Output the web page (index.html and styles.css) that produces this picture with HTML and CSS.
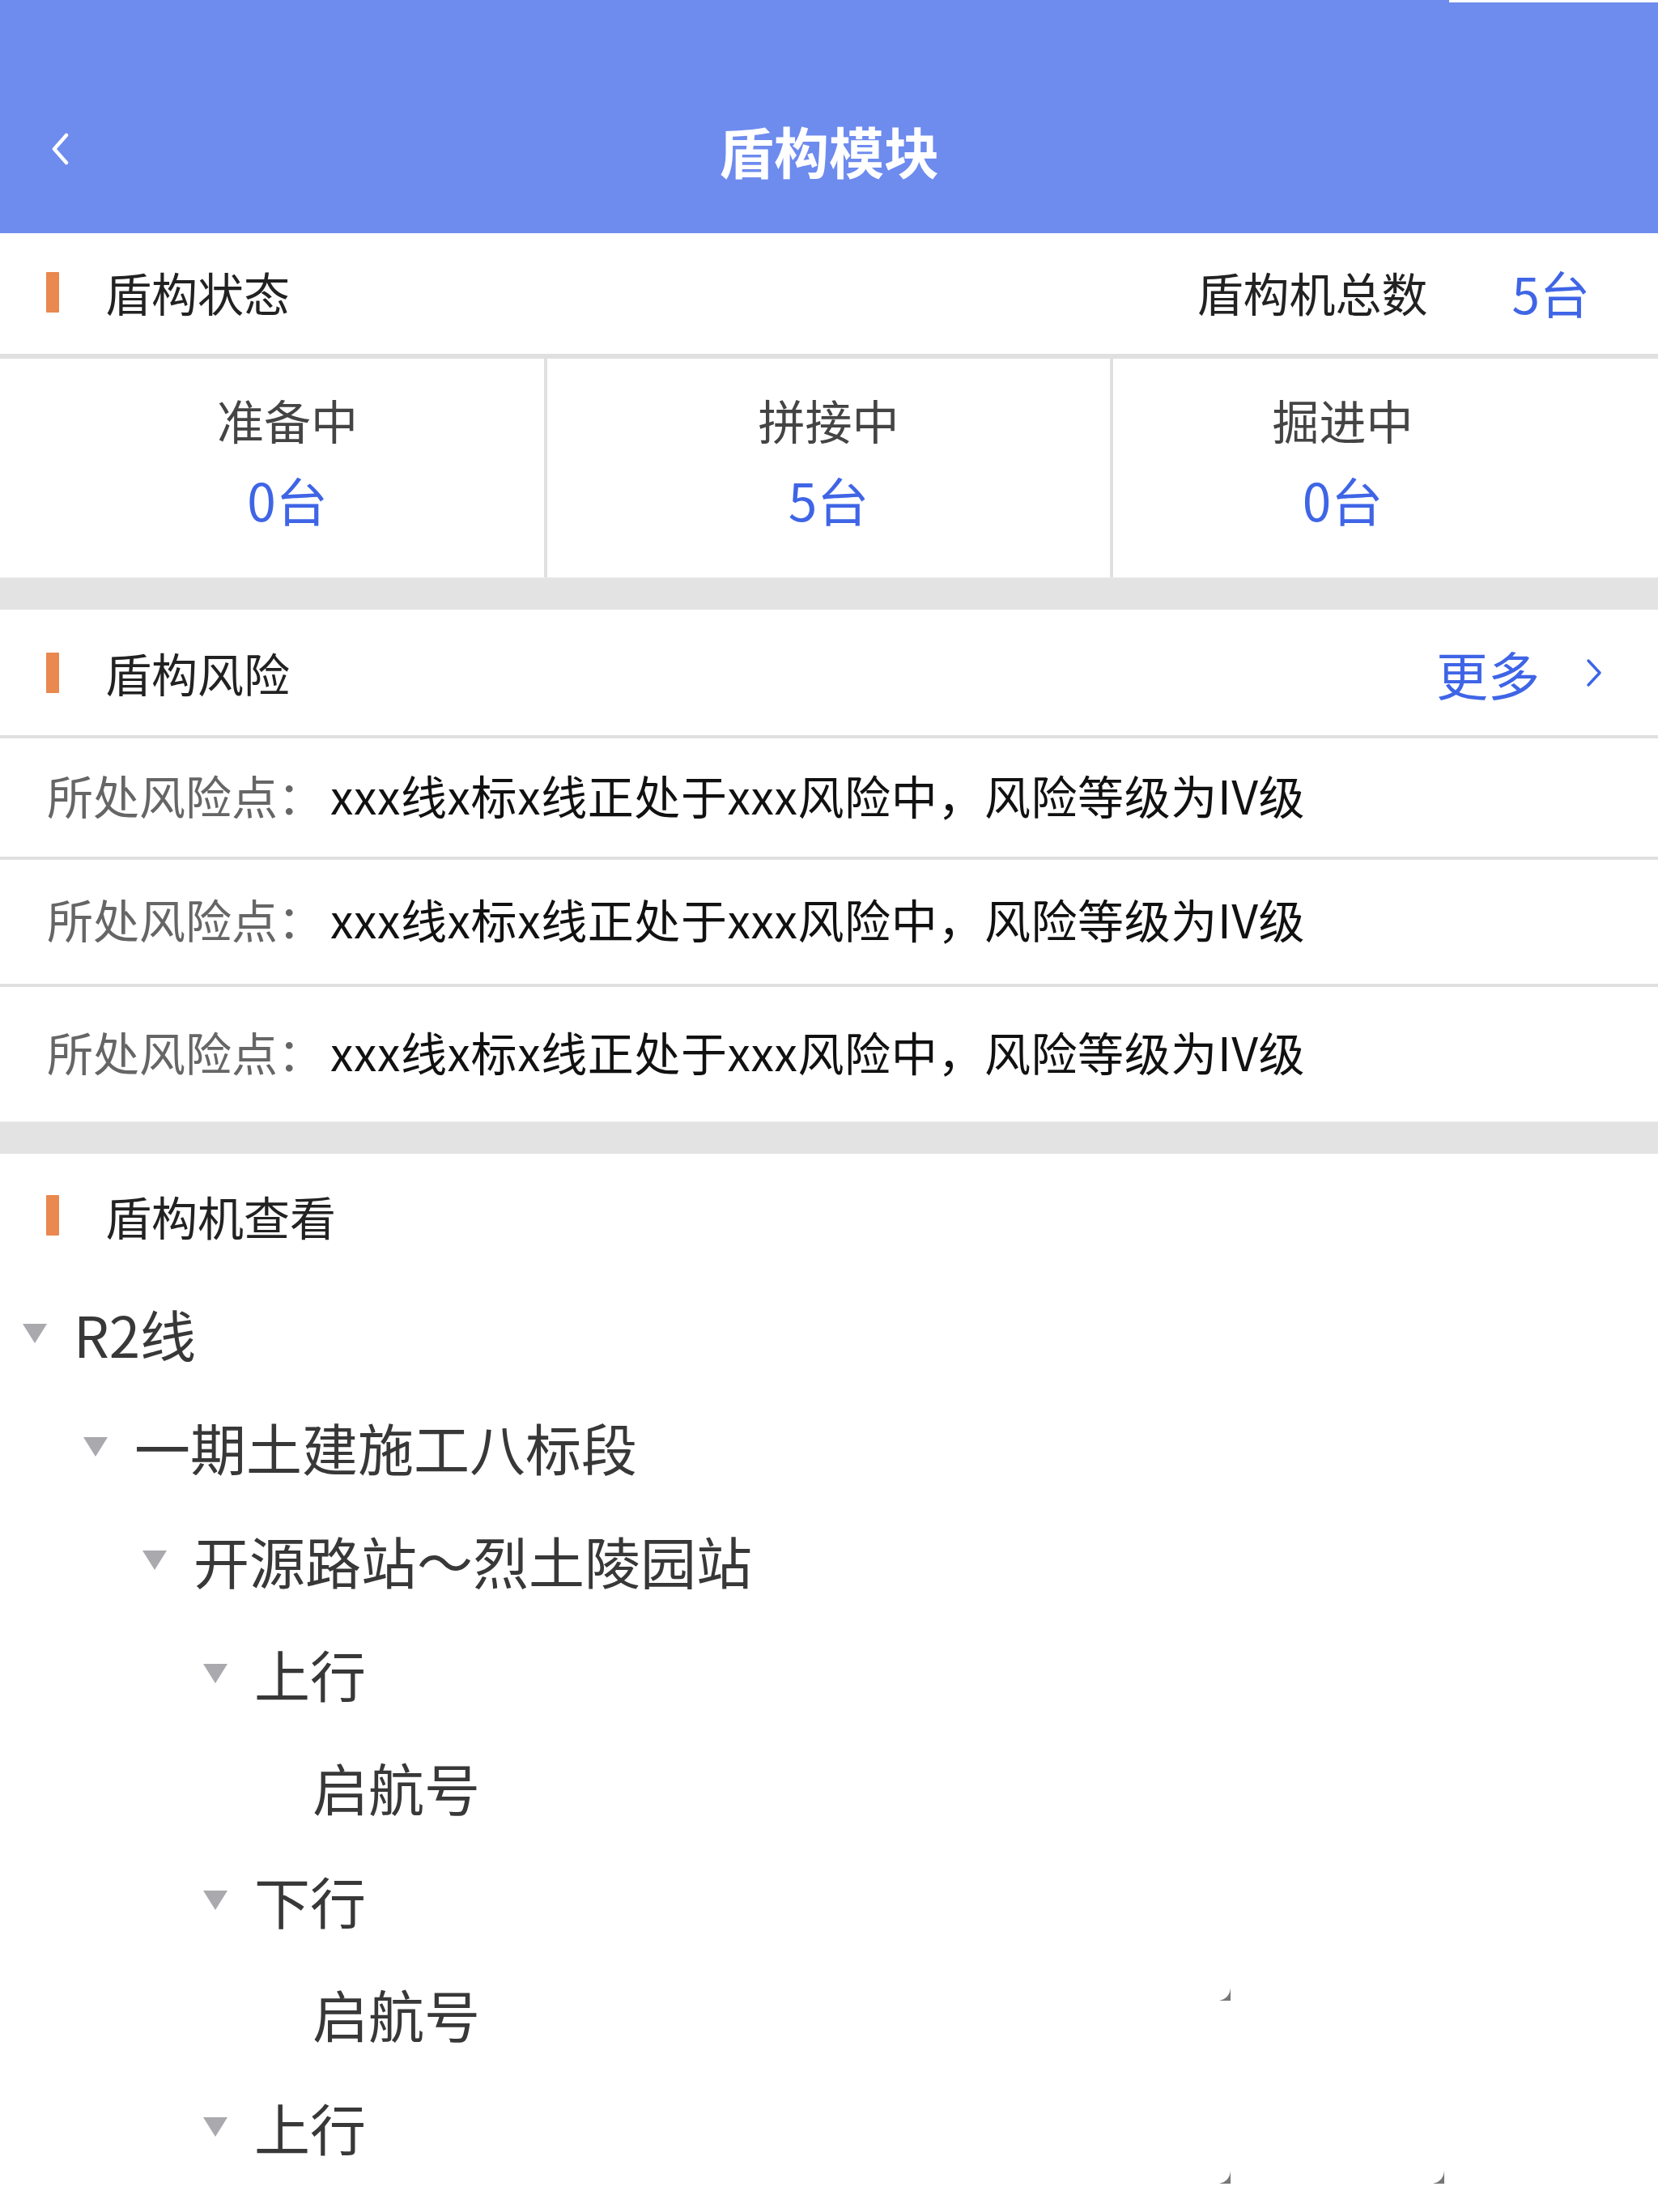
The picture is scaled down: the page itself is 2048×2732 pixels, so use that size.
FILE: index.html
```html
<!DOCTYPE html>
<html lang="zh-CN">
<head>
<meta charset="utf-8">
<title>盾构模块</title>
<link rel="stylesheet" href="styles.css">
</head>
<body>
<div class="page">
  <header class="topbar">
    <span class="back">
      <svg viewBox="0 0 24 40" width="24" height="40"><path d="M20 3 L5 20 L20 37" fill="none" stroke="#fff" stroke-width="4.5" stroke-linecap="round" stroke-linejoin="round"/></svg>
    </span>
    <h1 class="title">盾构模块</h1>
    <span class="edge-strip"></span>
  </header>

  <section class="block">
    <div class="sec-head sec-head-first">
      <span class="bar"></span>
      <span class="sec-title">盾构状态</span>
      <span class="sec-right"><span class="total-label">盾构机总数</span><span class="blue total-num">5台</span></span>
    </div>
    <div class="stats">
      <div class="stat stat-a"><span class="stat-label">准备中</span><span class="stat-val">0台</span></div>
      <div class="stat stat-b"><span class="stat-label">拼接中</span><span class="stat-val">5台</span></div>
      <div class="stat stat-c"><span class="stat-label">掘进中</span><span class="stat-val">0台</span></div>
    </div>
  </section>

  <div class="band"></div>

  <section class="block">
    <div class="sec-head sec-head-line">
      <span class="bar"></span>
      <span class="sec-title">盾构风险</span>
      <span class="sec-right more"><span>更多</span>
        <svg viewBox="0 0 22 38" width="22" height="38"><path d="M4 4 L18 19 L4 34" fill="none" stroke="#3f65e6" stroke-width="3.5" stroke-linecap="round" stroke-linejoin="round"/></svg>
      </span>
    </div>
    <ul class="risks">
      <li class="risk"><span class="risk-label">所处风险点：</span><span class="risk-text">xxx线x标x线正处于xxx风险中，风险等级为IV级</span></li>
      <li class="risk"><span class="risk-label">所处风险点：</span><span class="risk-text">xxx线x标x线正处于xxx风险中，风险等级为IV级</span></li>
      <li class="risk risk-last"><span class="risk-label">所处风险点：</span><span class="risk-text">xxx线x标x线正处于xxx风险中，风险等级为IV级</span></li>
    </ul>
  </section>

  <div class="band"></div>

  <section class="block tree-block">
    <div class="sec-head">
      <span class="bar"></span>
      <span class="sec-title">盾构机查看</span>
    </div>
    <ul class="tree">
      <li class="node lv0"><span class="caret"></span><span class="label">R2线</span></li>
      <li class="node lv1"><span class="caret"></span><span class="label">一期土建施工八标段</span></li>
      <li class="node lv2"><span class="caret"></span><span class="label">开源路站～烈土陵园站</span></li>
      <li class="node lv3"><span class="caret"></span><span class="label">上行</span></li>
      <li class="node lv4"><span class="caret none"></span><span class="label">启航号</span></li>
      <li class="node lv3"><span class="caret"></span><span class="label">下行</span></li>
      <li class="node lv4"><span class="caret none"></span><span class="label">启航号</span></li>
      <li class="node lv3"><span class="caret"></span><span class="label">上行</span></li>
    </ul>
    <svg class="corner c1" viewBox="0 0 14 16" width="14" height="16"><path d="M14 0 Q13 13 0 16 L14 16 Z" fill="#777"/></svg>
    <svg class="corner c2" viewBox="0 0 14 16" width="14" height="16"><path d="M14 0 Q13 13 0 16 L14 16 Z" fill="#777"/></svg>
    <svg class="corner c3" viewBox="0 0 14 16" width="14" height="16"><path d="M14 0 Q13 13 0 16 L14 16 Z" fill="#777"/></svg>
  </section>
</div>
</body>
</html>
```

FILE: styles.css
```css
* { box-sizing: border-box; }
html, body { margin: 0; padding: 0; background: #fff; }
body {
  font-family: "Noto Sans CJK SC", "Noto Sans", sans-serif;
  color: #222;
}
.page { position: relative; width: 2048px; min-height: 2732px; background: #fff; overflow: hidden; }

.topbar {
  position: relative;
  height: 288px;
  background: #6e8bee;
  display: flex;
  align-items: center;
  justify-content: center;
  padding-top: 84px;
}
.back {
  position: absolute;
  left: 62px;
  top: 164px;
  width: 24px;
  height: 40px;
  display: block;
}
.back svg { display: block; }
.edge-strip {
  position: absolute;
  right: 0;
  top: 0;
  width: 258px;
  height: 3px;
  background: #fff;
}
.title {
  margin: 0;
  font-size: 68px;
  font-weight: 700;
  color: #fff;
  line-height: 1;
}

.sec-head {
  height: 152px;
  display: flex;
  align-items: center;
  padding: 0 83px 0 57px;
}
.sec-head-first {
  height: 155px;
  border-bottom: 6px solid #e0e0e0;
  padding-right: 84px;
  padding-bottom: 4px;
}
.sec-head-line { height: 159px; border-bottom: 4px solid #e0e0e0; }
.bar {
  width: 16px;
  height: 50px;
  background: #e9884f;
  border-radius: 1px;
  flex: none;
}
.sec-title {
  margin-left: 57px;
  font-size: 57px;
  line-height: 1;
  color: #222;
}
.sec-right {
  margin-left: auto;
  display: flex;
  align-items: center;
  font-size: 57px;
  line-height: 1;
}
.total-label { color: #222; }
.blue { color: #3f65e6; }
.total-num { margin-left: 104px; font-size: 62px; }
.more { color: #3f65e6; font-size: 64px; margin-right: -15px; }
.more svg { margin-left: 56px; display: block; }

.stats {
  display: flex;
  height: 270px;
}
.stat {
  display: flex;
  flex-direction: column;
  align-items: center;
  justify-content: center;
  padding-bottom: 22px;
}
.stat-a { width: 676px; padding-left: 38px; border-right: 4px solid #e0e0e0; }
.stat-b { width: 699px; border-right: 4px solid #e0e0e0; }
.stat-c { flex: 1; padding-right: 106px; }
.stat-label {
  font-size: 58px;
  line-height: 98px;
  color: #444;
}
.stat-val {
  font-size: 64px;
  line-height: 98px;
  color: #3f65e6;
}

.band {
  height: 40px;
  background: #e3e3e3;
  border-top: 1px solid #ececec;
}

.risks { list-style: none; margin: 0; padding: 0; }
.risk {
  height: 150px;
  display: flex;
  align-items: center;
  padding-left: 58px;
  padding-bottom: 8px;
  border-bottom: 4px solid #e0e0e0;
  font-size: 57px;
  line-height: 1;
  white-space: nowrap;
}
.risk:nth-child(2) { height: 157px; }
.risk-last { height: 166px; border-bottom: none; }
.risk-label { color: #666; }
.risk-text { color: #111; margin-left: 8px; letter-spacing: 0.6px; }

.tree-block { position: relative; }
.tree { list-style: none; margin: 0; padding: 0; }
.node {
  height: 140px;
  display: flex;
  align-items: center;
  font-size: 69px;
  line-height: 1;
  color: #383838;
}
.lv0 { padding-left: 28px; }
.lv1 { padding-left: 103px; }
.lv2 { padding-left: 176px; }
.lv3 { padding-left: 251px; }
.lv4 { padding-left: 323px; }
.caret {
  width: 0;
  height: 0;
  border-left: 15px solid transparent;
  border-right: 15px solid transparent;
  border-top: 24px solid #a9a9ae;
  margin-right: 33px;
  flex: none;
}
.caret.none { visibility: hidden; }

.corner { position: absolute; display: block; }
.c1 { left: 1506px; top: 1030px; }
.c2 { left: 1506px; bottom: 0; }
.c3 { left: 1770px; bottom: 0; }
```
